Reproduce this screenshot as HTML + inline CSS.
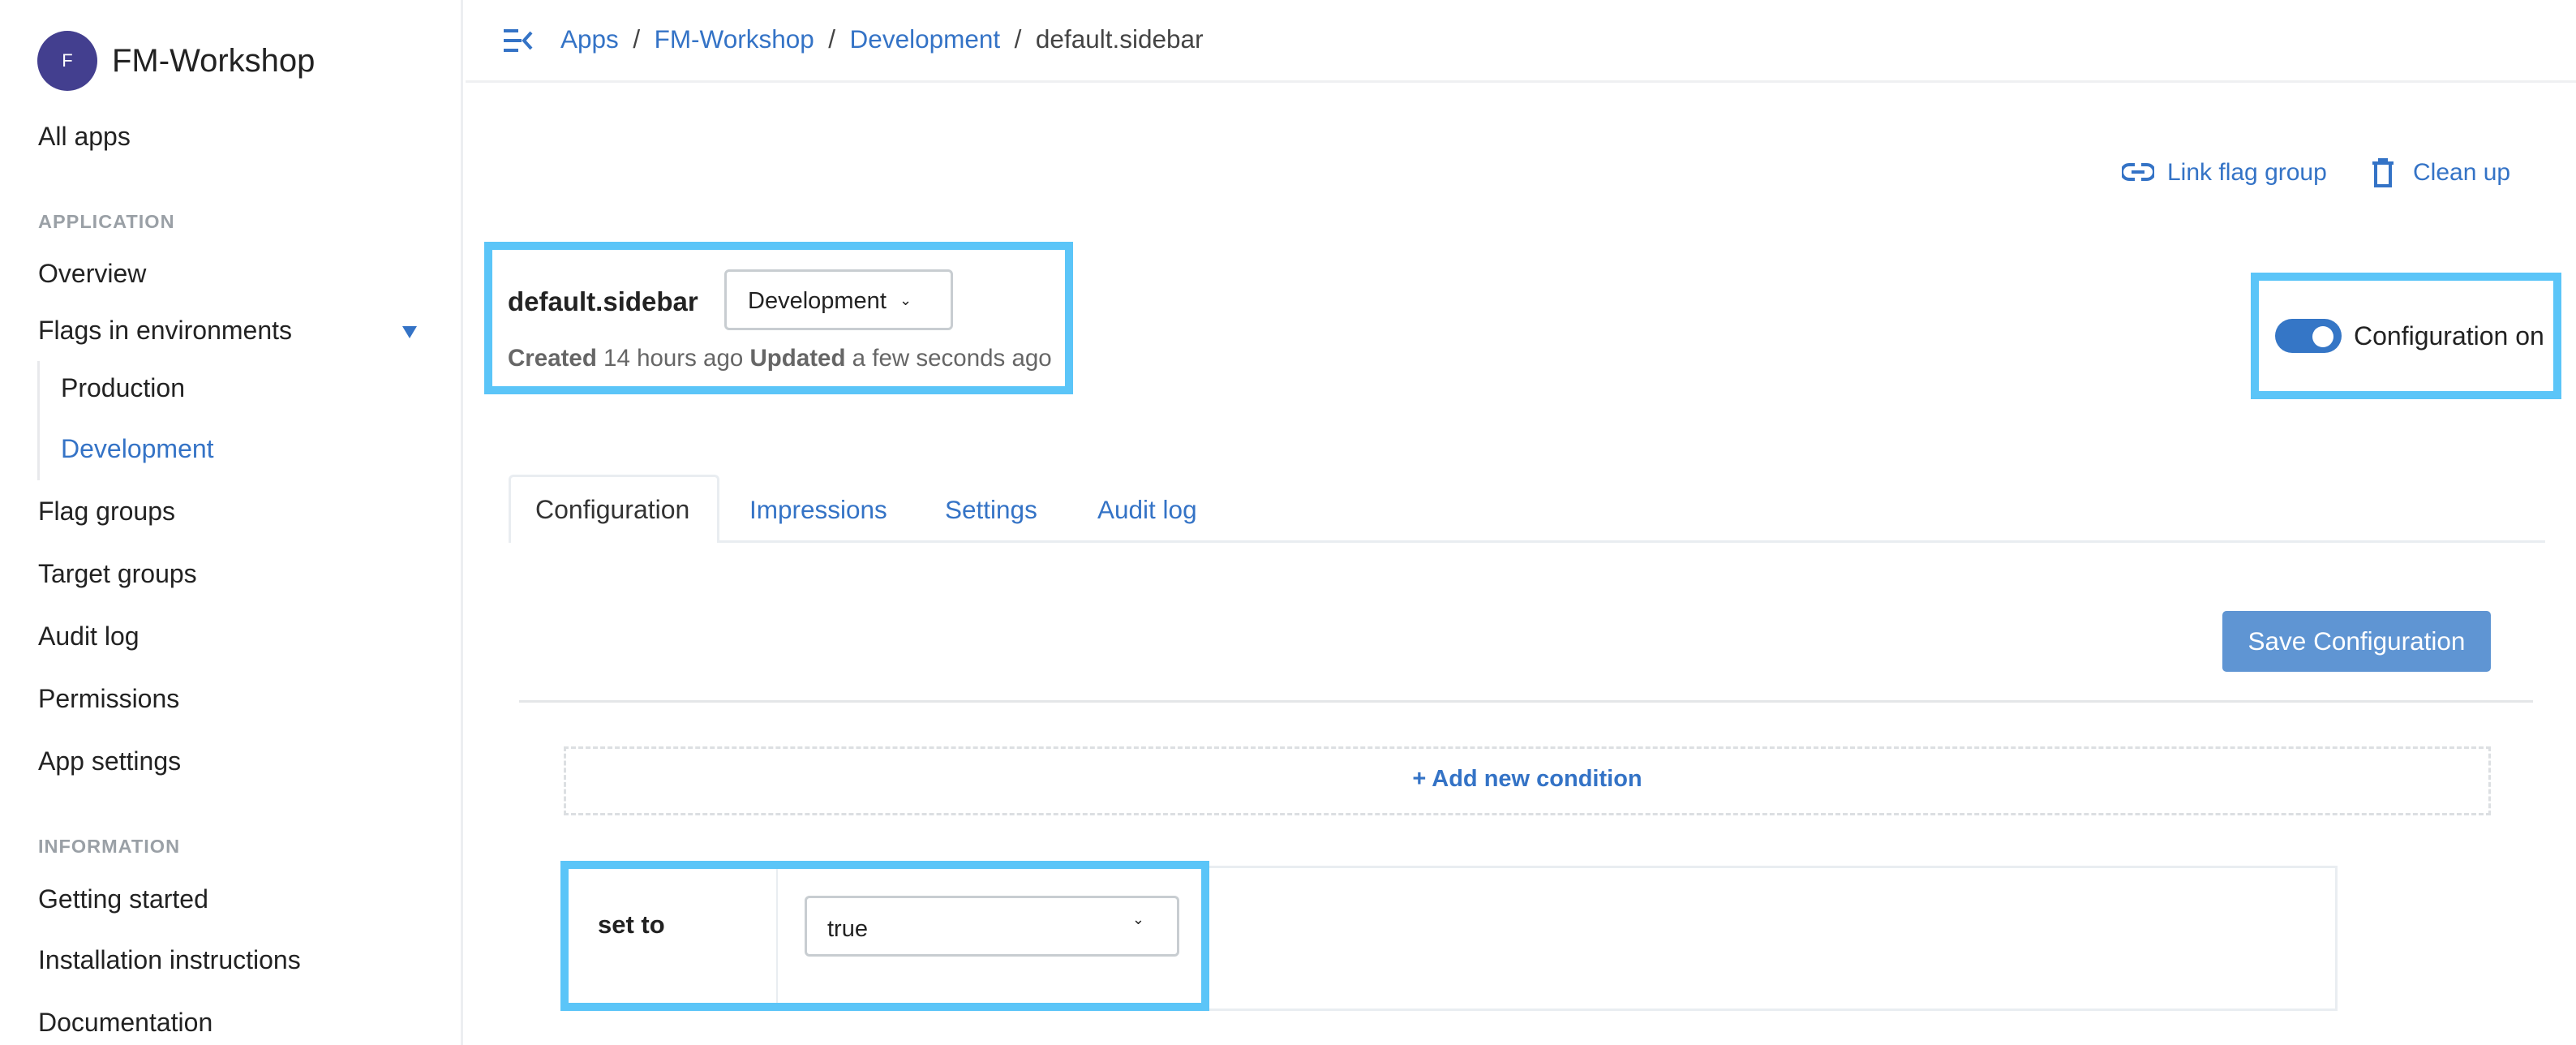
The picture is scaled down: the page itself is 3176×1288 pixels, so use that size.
<!DOCTYPE html>
<html><head><meta charset="utf-8"><style>
*{box-sizing:border-box;margin:0;padding:0}
body{width:3176px;height:1288px;overflow:hidden;background:#fff;font-family:"Liberation Sans",sans-serif;color:#222;position:relative}
.a{position:absolute;white-space:nowrap}
.side{position:absolute;left:0;top:0;width:571px;height:1288px;border-right:3px solid #eceef1}
.nav{font-size:32px;color:#222;left:47px}
.sec{font-size:23.5px;color:#9aa0a6;left:47px;letter-spacing:1px;font-weight:bold}
.blue{color:#3473c6}
.hl{position:absolute;border:10px solid #5bc5f8}
</style></head><body>
<div class="side">
<div class="a" style="left:46px;top:38px;width:74px;height:74px;border-radius:50%;background:#433f8f;color:#fff;font-size:22px;text-align:center;line-height:74px">F</div>
<div class="a" style="left:138px;top:53px;font-size:40px;color:#222">FM-Workshop</div>
<div class="a nav" style="top:150px">All apps</div>
<div class="a sec" style="top:260px">APPLICATION</div>
<div class="a nav" style="top:319px">Overview</div>
<div class="a nav" style="top:389px">Flags in environments</div>
<div class="a" style="left:496px;top:402px;width:0;height:0;border-left:9px solid transparent;border-right:9px solid transparent;border-top:15px solid #3473c6"></div>
<div class="a" style="left:46px;top:445px;width:3px;height:147px;background:#e8e9ec"></div>
<div class="a nav" style="left:75px;top:460px">Production</div>
<div class="a nav blue" style="left:75px;top:535px">Development</div>
<div class="a nav" style="top:612px">Flag groups</div>
<div class="a nav" style="top:689px">Target groups</div>
<div class="a nav" style="top:766px">Audit log</div>
<div class="a nav" style="top:843px">Permissions</div>
<div class="a nav" style="top:920px">App settings</div>
<div class="a sec" style="top:1030px">INFORMATION</div>
<div class="a nav" style="top:1090px">Getting started</div>
<div class="a nav" style="top:1165px">Installation instructions</div>
<div class="a nav" style="top:1242px">Documentation</div>
</div>
<div class="a" style="left:574px;top:99px;width:2602px;height:3px;background:#eff0f2"></div>
<svg class="a" style="left:619px;top:34px" width="40" height="32" viewBox="0 0 40 32"><g stroke="#3473c6" stroke-width="4" fill="none"><path d="M2 4h18M2 16h22M2 28h18M36 6l-9 10 9 10"/></g></svg>
<div class="a" style="left:691px;top:30px;font-size:31.5px;color:#444"><span class="blue">Apps</span> &nbsp;/&nbsp; <span class="blue">FM-Workshop</span> &nbsp;/&nbsp; <span class="blue">Development</span> &nbsp;/&nbsp; default.sidebar</div>
<svg class="a" style="left:2616px;top:200px" width="40" height="24" viewBox="0 0 40 24"><g stroke="#3473c6" stroke-width="4" fill="none"><path d="M16 3H9a9 9 0 0 0 0 18h7M24 3h7a9 9 0 0 1 0 18h-7M12 12h16"/></g></svg>
<div class="a blue" style="left:2672px;top:196px;font-size:30px">Link flag group</div>
<svg class="a" style="left:2924px;top:195px" width="28" height="36" viewBox="0 0 28 36"><g stroke="#3473c6" stroke-width="4" fill="none"><path d="M1 6h26M10 6V2h8v4M5 8v26h18V8"/></g></svg>
<div class="a blue" style="left:2975px;top:196px;font-size:30px">Clean up</div>
<div class="hl" style="left:597px;top:298px;width:726px;height:188px"></div>
<div class="a" style="left:626px;top:353px;font-size:33px;font-weight:bold;color:#222">default.sidebar</div>
<div class="a" style="left:893px;top:332px;width:282px;height:75px;border:3px solid #c8cdd1;border-radius:6px;font-size:29px;color:#222;padding:20px 0 0 26px">Development &nbsp;<span style="font-size:18px;position:relative;top:-4px">&#8964;</span></div>
<div class="a" style="left:626px;top:425px;font-size:29.5px;color:#666"><b>Created</b> 14 hours ago <b>Updated</b> a few seconds ago</div>
<div class="hl" style="left:2775px;top:336px;width:383px;height:156px"></div>
<div class="a" style="left:2805px;top:393px;width:82px;height:42px;border-radius:21px;background:#3576c6"></div>
<div class="a" style="left:2851px;top:402px;width:26px;height:26px;border-radius:50%;background:#fff"></div>
<div class="a" style="left:2902px;top:396px;font-size:32px;color:#222">Configuration on</div>
<div class="a" style="left:628px;top:666px;width:2510px;height:3px;background:#e9edf1"></div>
<div class="a" style="left:627px;top:585px;width:260px;height:84px;border:3px solid #e9edf1;border-bottom:none;border-radius:6px 6px 0 0;background:#fff"></div>
<div class="a" style="left:660px;top:610px;font-size:32px;color:#333">Configuration</div>
<div class="a blue" style="left:924px;top:610px;font-size:31.5px">Impressions</div>
<div class="a blue" style="left:1165px;top:610px;font-size:31.5px">Settings</div>
<div class="a blue" style="left:1353px;top:610px;font-size:31.5px">Audit log</div>
<div class="a" style="left:2740px;top:753px;width:331px;height:75px;border-radius:5px;background:#5f95d3;color:#fff;font-size:31.5px;text-align:center;line-height:75px">Save Configuration</div>
<div class="a" style="left:640px;top:863px;width:2483px;height:3px;background:#e4e6e8"></div>
<div class="a" style="left:695px;top:920px;width:2376px;height:85px;border:3px dashed #dcdfe2"></div>
<div class="a blue" style="left:695px;top:944px;width:2376px;text-align:center;font-size:29px;font-weight:bold">+ Add new condition</div>
<div class="a" style="left:695px;top:1067px;width:2187px;height:179px;border:3px solid #e9edf1"></div>
<div class="a" style="left:957px;top:1067px;width:2px;height:179px;background:#e9edf1"></div>
<div class="hl" style="left:691px;top:1061px;width:800px;height:185px"></div>
<div class="a" style="left:737px;top:1122px;font-size:31px;font-weight:bold;color:#222">set to</div>
<div class="a" style="left:992px;top:1104px;width:462px;height:75px;border:3px solid #c8cdd1;border-radius:6px;font-size:29px;color:#222;padding:22px 0 0 25px">true<span style="position:absolute;right:40px;top:16px;font-size:18px">&#8964;</span></div>
</body></html>
